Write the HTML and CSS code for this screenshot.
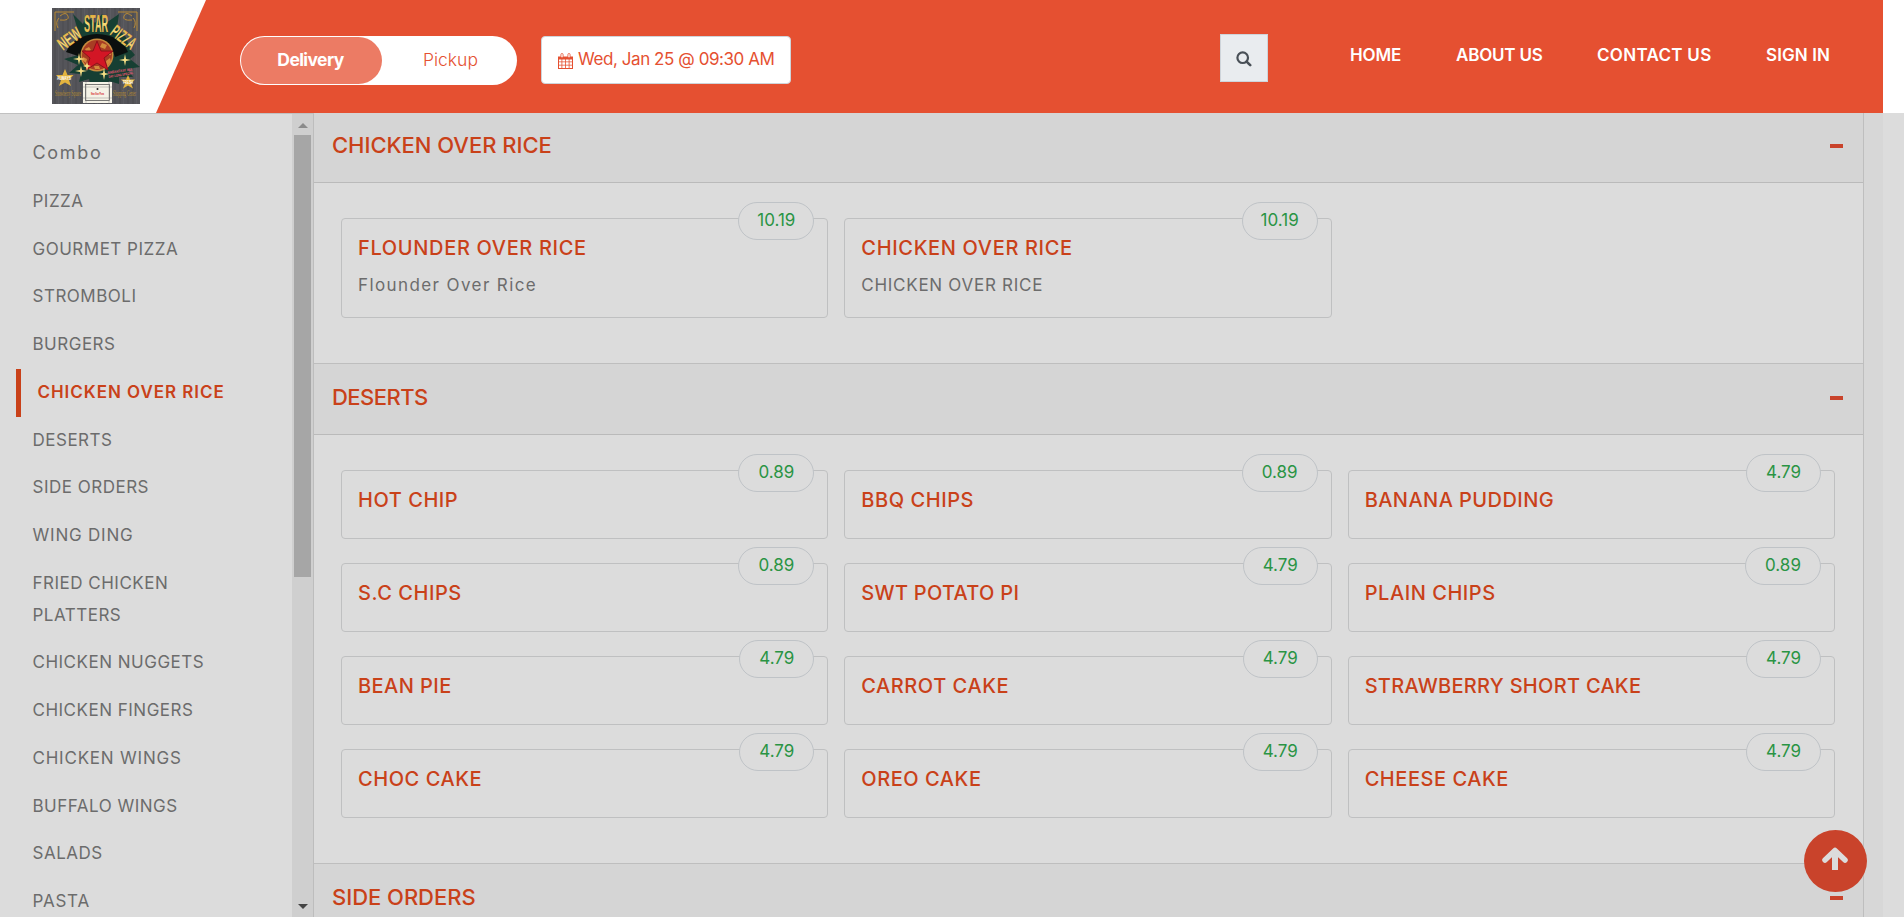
FILE: index.html
```
<!DOCTYPE html>
<html lang="en">
<head>
<meta charset="utf-8">
<title>New Star Pizza</title>
<link rel="stylesheet" href="styles.css">
</head>
<body>
<header class="header">
  <div class="brand">
    <svg class="logo" viewBox="0 0 88 96" width="88" height="96">
      <defs>
        <linearGradient id="gold" x1="0" y1="0" x2="0" y2="1"><stop offset="0" stop-color="#d99a25"/><stop offset=".5" stop-color="#f8dc78"/><stop offset="1" stop-color="#d9a02c"/></linearGradient>
        <pattern id="wood" width="13" height="96" patternUnits="userSpaceOnUse"><rect width="13" height="96" fill="#55555a"/><rect x="2" width="2" height="96" fill="#4f4f53"/><rect x="6" width="1" height="96" fill="#5c5c61"/><rect x="10" width="2" height="96" fill="#505055"/></pattern>
      </defs>
      <rect width="88" height="96" fill="url(#wood)"/>
      <path d="M21 6l10 10 3-9 9 8 7-9 4 9 13-9-2 14 9 9 4 12 5 6-5 4 10 8-13 2 6 8-14 0 0 7-10-3-4 9-6-8-8 5-2-8-10 3 2-8-12-1 9-8-14-6 14-4-5-11 7-7z" fill="#173f33"/>
      <path d="M14 44Q22 27 45 26Q69 27 76 44L63 49Q58 32 45 31Q33 32 29 49z" fill="#0b0f0e"/>
      <circle cx="45" cy="47" r="16.5" fill="#c98b3e"/>
      <circle cx="45" cy="47" r="15" fill="#a83d24"/>
      <path d="M33 41l4-2 2 3-4 3zM50 35l5 2-2 4-5-2zM31 49l4 2-1 4-4-3zM54 53l4-3 1 4-4 4zM42 58l5 0 1 3-5 0zM54 43l4 0 1 4-4 0z" fill="#d38b3d"/>
      <path d="M45 33l4 10 12 0-9 7 4 12-11-7-11 7 4-12-8-7 11 0z" fill="#d31625" stroke="#8e101b" stroke-width="1"/>
      <g fill="none" stroke="#b98a35" stroke-width="1"><path d="M3 23V4H22M6 20q-3-6 1-10M8 8q6-5 8 0t-8 4M85 23V4H66M82 20q3-6-1-10M80 8q-6-5-8 0t8 4"/></g>
      <g transform="translate(11 43) rotate(-36)"><text class="logo-side" textLength="25" lengthAdjust="spacingAndGlyphs">NEW</text></g>
      <text class="logo-mid" x="32" y="24" textLength="24" lengthAdjust="spacingAndGlyphs">STAR</text>
      <g transform="translate(57 26) rotate(37)"><text class="logo-side" textLength="27" lengthAdjust="spacingAndGlyphs">PIZZA</text></g>
      <g fill="#f7df85"><path d="M27 45l1 5 5 1-5 1-1 5-1-5-5-1 5-1zM29 58l1 4 5 1-5 1-1 5-1-5-5-1 5-1zM52 60l1 5 4 1-4 1-1 5-1-5-4-1 4-1zM73 46l1 5 5 1-5 1-1 5-1-5-5-1 5-1zM35 54l1 3 3 1-3 1-1 4-1-4-3-1 3-1z"/></g>
      <path d="M13 61l2.500 6 6 0-4.500 5 2 6-6-3.500-6 3.500 2-6-5-5 6.500 0zM76 67l2 4.500 5 0-4 4 2 5-5-3-5 3 2-5-4-4 5 0z" fill="#e3b43f"/>
      <text class="logo-mini" x="5" y="72" textLength="14" lengthAdjust="spacingAndGlyphs">ALWAYS</text>
      <text class="logo-mini" x="71" y="76" textLength="10" lengthAdjust="spacingAndGlyphs">FRESH</text>
      <g transform="rotate(-9 56 66)"><text class="logo-pink" x="56" y="66" textLength="25" lengthAdjust="spacingAndGlyphs">BREAKFAST ALL</text><text class="logo-pink" x="56" y="70" textLength="25" lengthAdjust="spacingAndGlyphs">DAY LONG SPECIAL</text></g>
      <text class="logo-town" x="3" y="88" textLength="26" lengthAdjust="spacingAndGlyphs">Strawberry Square</text>
      <text class="logo-town" x="61" y="88" textLength="23" lengthAdjust="spacingAndGlyphs">Shopping Center</text>
      <rect x="31" y="74" width="29" height="21" fill="#f5f2e6"/>
      <rect x="33.500" y="76.500" width="24" height="16" fill="none" stroke="#444" stroke-width=".7"/>
      <path d="M31 79h29M31 90h29M34 74v21M57 74v21" stroke="#777" stroke-width=".4"/>
      <circle cx="45.500" cy="81" r="1" fill="#222"/>
      <text class="logo-sign" x="39" y="86.500" textLength="13" lengthAdjust="spacingAndGlyphs">New Star Pizza</text>
    </svg>
  </div>
  <div class="bar">
    <div class="toggle"><span class="mode on">Delivery</span><span class="mode">Pickup</span></div>
    <div class="date">
      <svg width="15" height="16" viewBox="0 0 15 16"><path d="M0 3.500h15V16H0z" fill="#e55031"/><path d="M1 6.500h2.500v2H1zM4.300 6.500h2.800v2H4.300zM7.900 6.500h2.800v2H7.900zM11.500 6.500H14v2h-2.500zM1 9.300h2.500v2.400H1zM4.300 9.300h2.800v2.400H4.300zM7.900 9.300h2.800v2.400H7.900zM11.500 9.300H14v2.400h-2.500zM1 12.500h2.500V15H1zM4.300 12.500h2.800V15H4.300zM7.900 12.500h2.800V15H7.900zM11.500 12.500H14V15h-2.500z" fill="#fff"/><rect x="2.900" y=".5" width="2.200" height="4.300" rx="1.100" fill="#fff" stroke="#e55031" stroke-width=".8"/><rect x="9.900" y=".5" width="2.200" height="4.300" rx="1.100" fill="#fff" stroke="#e55031" stroke-width=".8"/></svg>
      <span>Wed, Jan 25 @ 09:30 AM</span>
    </div>
    <div class="search"><svg width="16" height="16" viewBox="0 0 16 16" fill="none" stroke="#495057" stroke-width="2.200"><circle cx="6.700" cy="6.700" r="5.300"/><path d="M10.600 10.600l3.600 3.600" stroke-width="2.600" stroke-linecap="round"/></svg></div>
    <nav class="nav"><a class="n1">HOME</a><a class="n2">ABOUT US</a><a class="n3">CONTACT US</a><a class="n4">SIGN IN</a></nav>
  </div>
</header>
<div class="page">
  <aside class="sidebar">
    <ul class="cats">
      <li class="mixed">Combo</li><li>PIZZA</li><li>GOURMET PIZZA</li><li>STROMBOLI</li><li>BURGERS</li><li class="active">CHICKEN OVER RICE</li><li>DESERTS</li><li>SIDE ORDERS</li><li class="wide">WING DING</li><li>FRIED CHICKEN<br>PLATTERS</li><li>CHICKEN NUGGETS</li><li>CHICKEN FINGERS</li><li class="wide">CHICKEN WINGS</li><li>BUFFALO WINGS</li><li>SALADS</li><li class="wide">PASTA</li>
    </ul>
    <div class="scroll"><i class="up"></i><i class="thumb"></i><i class="down"></i></div>
  </aside>
  <main class="menu">
    <section>
      <h2 class="head loose">CHICKEN OVER RICE<i class="minus"></i></h2>
      <div class="grid">
        <article class="card tall"><h3>FLOUNDER OVER RICE</h3><p>Flounder Over Rice</p><b class="price">10.19</b></article>
        <article class="card tall"><h3>CHICKEN OVER RICE</h3><p class="caps">CHICKEN OVER RICE</p><b class="price">10.19</b></article>
      </div>
    </section>
    <section>
      <h2 class="head">DESERTS<i class="minus"></i></h2>
      <div class="grid">
        <article class="card"><h3>HOT CHIP</h3><b class="price">0.89</b></article>
        <article class="card"><h3>BBQ CHIPS</h3><b class="price">0.89</b></article>
        <article class="card"><h3 class="even">BANANA PUDDING</h3><b class="price four">4.79</b></article>
        <article class="card"><h3>S.C CHIPS</h3><b class="price">0.89</b></article>
        <article class="card"><h3 class="tight">SWT POTATO PI</h3><b class="price four">4.79</b></article>
        <article class="card"><h3>PLAIN CHIPS</h3><b class="price">0.89</b></article>
        <article class="card"><h3 class="even">BEAN PIE</h3><b class="price four">4.79</b></article>
        <article class="card"><h3>CARROT CAKE</h3><b class="price four">4.79</b></article>
        <article class="card"><h3 class="tight">STRAWBERRY SHORT CAKE</h3><b class="price four">4.79</b></article>
        <article class="card"><h3>CHOC CAKE</h3><b class="price four">4.79</b></article>
        <article class="card"><h3>OREO CAKE</h3><b class="price four">4.79</b></article>
        <article class="card"><h3>CHEESE CAKE</h3><b class="price four">4.79</b></article>
      </div>
    </section>
    <section>
      <h2 class="head loose">SIDE ORDERS<i class="minus"></i></h2>
    </section>
  </main>
  <div class="gutter"></div>
</div>
<a class="top"><svg width="26" height="24" viewBox="0 0 26 24" fill="none" stroke="#dcdcdc"><path d="M13 23V5" stroke-width="6"/><path d="M3 13L13 3.500L23 13" stroke-width="5.500" stroke-linecap="round" stroke-linejoin="round"/></svg></a>
</body>
</html>
```
FILE: styles.css
```
* { box-sizing: border-box; }
body { margin: 0; height: 917px; overflow: hidden; background: #dcdcdc; font-family: Inter, "Liberation Sans", sans-serif; font-size: 17px; }
h2, h3, p, ul { margin: 0; padding: 0; }
ul { list-style: none; }
svg { display: block; flex: none; }

.header { display: flex; height: 113px; padding-right: 21px; background: #fff; }
.brand { width: 156px; flex: none; padding: 8px 0 0 52px; }
.bar { flex: 1; display: flex; align-items: flex-start; padding-left: 84px; background: #e55031; clip-path: polygon(50px 0, 100% 0, 100% 100%, 0 100%); }
.toggle { display: flex; width: 277px; height: 49px; margin-top: 36px; padding: 1px; border-radius: 25px; background: #fff; }
.mode { display: flex; align-items: center; justify-content: center; width: 134px; padding: 0 0 2px 3px; color: #e55031; font-size: 17.500px; font-weight: 300; letter-spacing: 0; }
.mode.on { width: 141px; padding: 0 2px 2px 0; border-radius: 24px; background: #ec7b64; color: #fff; font-weight: 700; letter-spacing: -.6px; }
.date { display: flex; align-items: center; gap: 5px; width: 250px; height: 48px; margin: 36px 0 0 24px; padding: 2px 0 0 16px; border: 1px solid #ced4da; border-radius: 4px; background: #fff; color: #e55031; white-space: nowrap; letter-spacing: -.43px; }
.date span { margin-top: -4px; }
.search { width: 48px; height: 48px; margin: 34px 0 0 429px; padding: 16px 0 0 15px; border: 1px solid #ced4da; background: #e9ecef; }
.nav { display: flex; margin: 44px 0 0 82px; color: #fff; font-weight: 600; line-height: 22px; letter-spacing: -.1px; white-space: nowrap; }
.n1 { width: 106px; }
.n2 { width: 141px; letter-spacing: -.2px; }
.n3 { width: 169px; letter-spacing: .3px; }
.n4 { letter-spacing: .1px; }

.page { display: flex; height: 804px; overflow: hidden; }
.sidebar { display: flex; width: 314px; flex: none; border-top: 1px solid #c1c1c1; border-right: 1px solid #bdbdbd; }
.cats { flex: 1; padding: 16px 0 0 16px; color: #6c6c6c; line-height: 31.770px; letter-spacing: .5px; }
.cats li { padding: 8px 0 8px 16.500px; white-space: nowrap; }
.cats .mixed { padding: 7px 0 9px 16.500px; font-size: 18px; letter-spacing: 1.700px; }
.cats .wide { letter-spacing: .78px; }
.cats .active { padding-left: 16.500px; border-left: 5px solid #c94119; color: #c94119; font-weight: 600; letter-spacing: .96px; }
.scroll { display: flex; flex-direction: column; align-items: center; width: 21px; padding: 9px 0 8px; background: #cfcfcf; }
.up { border: 5px solid transparent; border-top: 0; border-bottom: 5px solid #8b8b8b; }
.thumb { width: 17px; height: 442px; margin-top: 7px; background: #a6a6a6; }
.down { margin-top: auto; border: 5px solid transparent; border-bottom: 0; border-top: 5px solid #444; }

.menu { width: 1550px; flex: none; margin-top: -2px; border-right: 1px solid #bebebe; }
.gutter { width: 19px; background: #d7d7d7; }
.head { display: flex; justify-content: space-between; height: 72px; padding: 21px 20px 0 18px; border-top: 1px solid #bebebe; border-bottom: 1px solid #bababa; background: #d5d5d5; color: #c94119; font-size: 22px; font-weight: 550; line-height: 24px; letter-spacing: -.55px; }
.head.loose { letter-spacing: -.03px; }
.minus { width: 13px; height: 4px; margin-top: 11px; background: #c9432b; }
.grid { display: grid; grid-template-columns: repeat(3, 1fr); gap: 24px 16px; padding: 35px 28px 45px 27px; }
.card { position: relative; height: 69px; padding: 16px; border: 1px solid #bfc0c1; border-radius: 4px; }
.card.tall { height: 100px; }
.card h3 { color: #c94119; font-size: 20px; font-weight: 550; line-height: 26px; letter-spacing: .55px; white-space: nowrap; }
.card.tall h3 { letter-spacing: .66px; }
.card .even { letter-spacing: .45px; }
.card .tight { letter-spacing: .29px; }
.card p { margin-top: 12px; color: #6c6c6c; line-height: 24px; letter-spacing: 1.400px; }
.card .caps { letter-spacing: .72px; }
.price { position: absolute; top: -17px; right: 13px; width: 76px; height: 38px; border: 1px solid #bfc3c7; border-radius: 19px; background: #dcdcdc; color: #2a9444; font-weight: 400; line-height: 35px; text-align: center; letter-spacing: 0; }
.price.four { width: 75px; }
.top { position: absolute; left: 1804px; top: 830px; width: 63px; height: 62px; padding: 17px 0 0 18px; border-radius: 50%; background: #c9432b; }

.logo-side { font: 700 18px "Liberation Sans", sans-serif; fill: url(#gold); }
.logo-mid { font: 700 23px "Liberation Sans", sans-serif; fill: url(#gold); }
.logo-mini { font: 700 4.500px "Liberation Sans", sans-serif; fill: #fff; }
.logo-pink { font: 700 3.500px "Liberation Sans", sans-serif; fill: #f05575; }
.logo-town { font: 9px "Liberation Serif", serif; fill: #b58b32; }
.logo-sign { font: 700 3px "Liberation Sans", sans-serif; fill: #d31625; }
```
